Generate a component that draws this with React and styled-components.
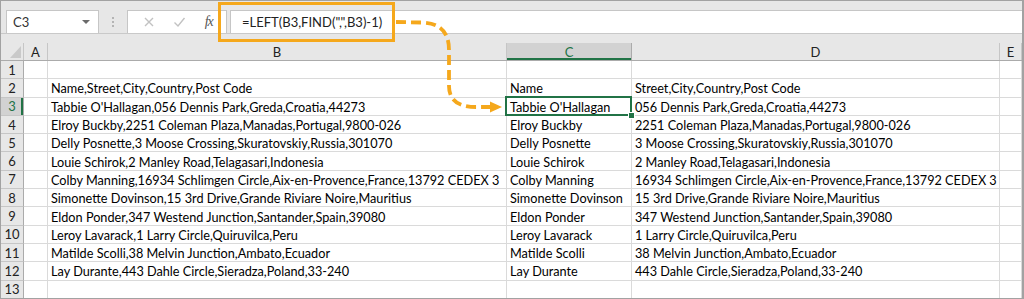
import React from 'react'
import styled, { createGlobalStyle } from 'styled-components'

const ORANGE = '#f5a81c'
const GREEN = '#217346'
const COLS = '23px 24px 459px 125px 368px 1fr'

const rows = [
  ['', '', ''],
  ['Name,Street,City,Country,Post Code', 'Name', 'Street,City,Country,Post Code'],
  ["Tabbie O'Hallagan,056 Dennis Park,Greda,Croatia,44273", "Tabbie O'Hallagan", '056 Dennis Park,Greda,Croatia,44273'],
  ['Elroy Buckby,2251 Coleman Plaza,Manadas,Portugal,9800-026', 'Elroy Buckby', '2251 Coleman Plaza,Manadas,Portugal,9800-026'],
  ['Delly Posnette,3 Moose Crossing,Skuratovskiy,Russia,301070', 'Delly Posnette', '3 Moose Crossing,Skuratovskiy,Russia,301070'],
  ['Louie Schirok,2 Manley Road,Telagasari,Indonesia', 'Louie Schirok', '2 Manley Road,Telagasari,Indonesia'],
  ['Colby Manning,16934 Schlimgen Circle,Aix-en-Provence,France,13792 CEDEX 3', 'Colby Manning', '16934 Schlimgen Circle,Aix-en-Provence,France,13792 CEDEX 3'],
  ['Simonette Dovinson,15 3rd Drive,Grande Riviare Noire,Mauritius', 'Simonette Dovinson', '15 3rd Drive,Grande Riviare Noire,Mauritius'],
  ['Eldon Ponder,347 Westend Junction,Santander,Spain,39080', 'Eldon Ponder', '347 Westend Junction,Santander,Spain,39080'],
  ['Leroy Lavarack,1 Larry Circle,Quiruvilca,Peru', 'Leroy Lavarack', '1 Larry Circle,Quiruvilca,Peru'],
  ['Matilde Scolli,38 Melvin Junction,Ambato,Ecuador', 'Matilde Scolli', '38 Melvin Junction,Ambato,Ecuador'],
  ['Lay Durante,443 Dahle Circle,Sieradza,Poland,33-240', 'Lay Durante', '443 Dahle Circle,Sieradza,Poland,33-240'],
  ['', '', '']
]

const GlobalStyle = createGlobalStyle`
  body {
    margin: 0;
    background: #fff;
    font-family: Lato, "Open Sans", sans-serif;
  }
`

const Frame = styled.div`
  position: relative;
  width: 1024px;
  height: 299px;
  box-sizing: border-box;
  border: 1px solid #a2a2a2;
  border-right-width: 2px;
  overflow: hidden;
  background: #fff;
`

const Toolbar = styled.div`
  display: flex;
  align-items: flex-start;
  height: 33px;
  box-sizing: border-box;
  padding: 9px 0 0 5px;
  background: #e7e7e7;
  border-bottom: 1px solid #c9c9c9;
`

const NameBox = styled.div`
  position: relative;
  width: 93px;
  height: 23px;
  box-sizing: border-box;
  border: 1px solid #c6c6c6;
  border-bottom: none;
  background: #fff;
  display: flex;
  align-items: center;
  padding-left: 6px;
  font-size: 13px;
  color: #333;
`

const Caret = styled.span`
  margin-left: auto;
  margin-right: 8px;
  width: 0;
  height: 0;
  border-left: 4px solid transparent;
  border-right: 4px solid transparent;
  border-top: 4px solid #6b6b6b;
`

const Dots = styled.div`
  width: 28px;
  height: 23px;
  display: flex;
  flex-direction: column;
  align-items: center;
  justify-content: center;
  gap: 2px;

  span {
    width: 2px;
    height: 2px;
    background: #b4b4b4;
  }
`

const ButtonBox = styled.div`
  width: 100px;
  height: 23px;
  box-sizing: border-box;
  border: 1px solid #c6c6c6;
  border-bottom: none;
  background: #fff;
  display: flex;
  align-items: center;
  justify-content: space-around;
  padding: 0 4px 0 6px;
`

const Fx = styled.span`
  font-family: "Liberation Serif", serif;
  font-style: italic;
  font-size: 14px;
  color: #555;
  letter-spacing: -1px;
`

const FormulaInput = styled.div`
  flex: 1;
  margin-left: 3px;
  height: 23px;
  box-sizing: border-box;
  border: 1px solid #c6c6c6;
  border-right: none;
  border-bottom: none;
  background: #fff;
  display: flex;
  align-items: center;
  padding-left: 11px;
  font-size: 13px;
  color: #222;
`

const HeaderRow = styled.div`
  display: grid;
  grid-template-columns: ${COLS};
  height: 27px;
  box-sizing: border-box;
  padding-top: 9px;
  background: #e7e7e7;
  border-bottom: 1px solid #ababab;
`

const ColHead = styled.div`
  display: flex;
  align-items: center;
  justify-content: center;
  box-sizing: border-box;
  border-right: 1px solid ${p => (p.$active ? '#ababab' : '#c6c6c6')};
  font-size: 13px;
  color: ${p => (p.$active ? GREEN : '#222')};
  background: ${p => (p.$active ? '#d2d2d2' : 'transparent')};
  box-shadow: ${p => (p.$active ? `inset 0 -2px 0 ${GREEN}` : 'none')};
`

const Corner = styled.div`
  position: relative;
  border-right: 1px solid #c6c6c6;

  &::after {
    content: '';
    position: absolute;
    right: 2px;
    bottom: 2px;
    width: 0;
    height: 0;
    border-left: 11px solid transparent;
    border-bottom: 12px solid #c9c9c9;
  }
`

const Row = styled.div`
  display: grid;
  grid-template-columns: ${COLS};
  height: 18.3px;
`

const RowHead = styled.div`
  display: flex;
  align-items: center;
  justify-content: center;
  box-sizing: border-box;
  background: ${p => (p.$active ? '#d2d2d2' : '#e7e7e7')};
  border-bottom: 1px solid #c6c6c6;
  border-right: 1px solid #ababab;
  box-shadow: ${p => (p.$active ? `inset -2px 0 0 ${GREEN}` : 'none')};
  font-size: 13px;
  color: ${p => (p.$active ? GREEN : '#222')};
`

const Cell = styled.div`
  position: relative;
  box-sizing: border-box;
  border-right: 1px solid #dadada;
  border-bottom: 1px solid #dadada;
  padding: 1px 0 0 3px;
  display: flex;
  align-items: center;
  white-space: nowrap;
  overflow: ${p => (p.$selected ? 'visible' : 'hidden')};
  font-size: 12.7px;
  color: #000;

  ${p =>
    p.$selected &&
    `
    &::before {
      content: '';
      position: absolute;
      left: -2px;
      top: -2px;
      right: -1px;
      bottom: -1px;
      border: 2px solid ${GREEN};
      z-index: 2;
    }
    &::after {
      content: '';
      position: absolute;
      right: -4px;
      bottom: -4px;
      width: 5px;
      height: 5px;
      background: ${GREEN};
      border: 1px solid #fff;
      z-index: 3;
    }
  `}
`

const Highlight = styled.div`
  position: absolute;
  left: 217px;
  top: 1px;
  width: 177px;
  height: 40px;
  box-sizing: border-box;
  border: 3px solid ${ORANGE};
  pointer-events: none;
`

const Overlay = styled.svg`
  position: absolute;
  left: -1px;
  top: -1px;
  pointer-events: none;
  z-index: 5;
`

const XIcon = () => (
  <svg width="12" height="12" viewBox="0 0 12 12">
    <path d="M2 2 L10 10 M10 2 L2 10" stroke="#c2c2c2" strokeWidth="1.4" />
  </svg>
)

const CheckIcon = () => (
  <svg width="13" height="12" viewBox="0 0 13 12">
    <path d="M1.5 6.5 L5 10 L11.5 2" stroke="#c2c2c2" strokeWidth="1.4" fill="none" />
  </svg>
)

const App = () => (
  <>
    <GlobalStyle />
    <Frame>
      <Toolbar>
        <NameBox>
          C3
          <Caret />
        </NameBox>
        <Dots>
          <span />
          <span />
          <span />
        </Dots>
        <ButtonBox>
          <XIcon />
          <CheckIcon />
          <Fx>fx</Fx>
        </ButtonBox>
        <FormulaInput>=LEFT(B3,FIND(",",B3)-1)</FormulaInput>
      </Toolbar>

      <HeaderRow>
        <Corner />
        <ColHead>A</ColHead>
        <ColHead>B</ColHead>
        <ColHead $active>C</ColHead>
        <ColHead>D</ColHead>
        <ColHead>E</ColHead>
      </HeaderRow>

      {rows.map(([b, c, d], i) => (
        <Row key={i}>
          <RowHead $active={i === 2}>{i + 1}</RowHead>
          <Cell />
          <Cell>{b}</Cell>
          <Cell $selected={i === 2}>{c}</Cell>
          <Cell>{d}</Cell>
          <Cell />
        </Row>
      ))}

      <Highlight />
      <Overlay width="1024" height="299" viewBox="0 0 1024 299">
        <path
          d="M396 22 L422 22.5 C440 23 449 32 449 50 L449 86 C449 100 458 107 476 107 L491 107"
          stroke={ORANGE}
          strokeWidth="3.8"
          strokeDasharray="10 5"
          fill="none"
        />
        <path d="M490 101.5 L502 107 L490 112.5 Z" fill={ORANGE} />
      </Overlay>
    </Frame>
  </>
)

export default App
